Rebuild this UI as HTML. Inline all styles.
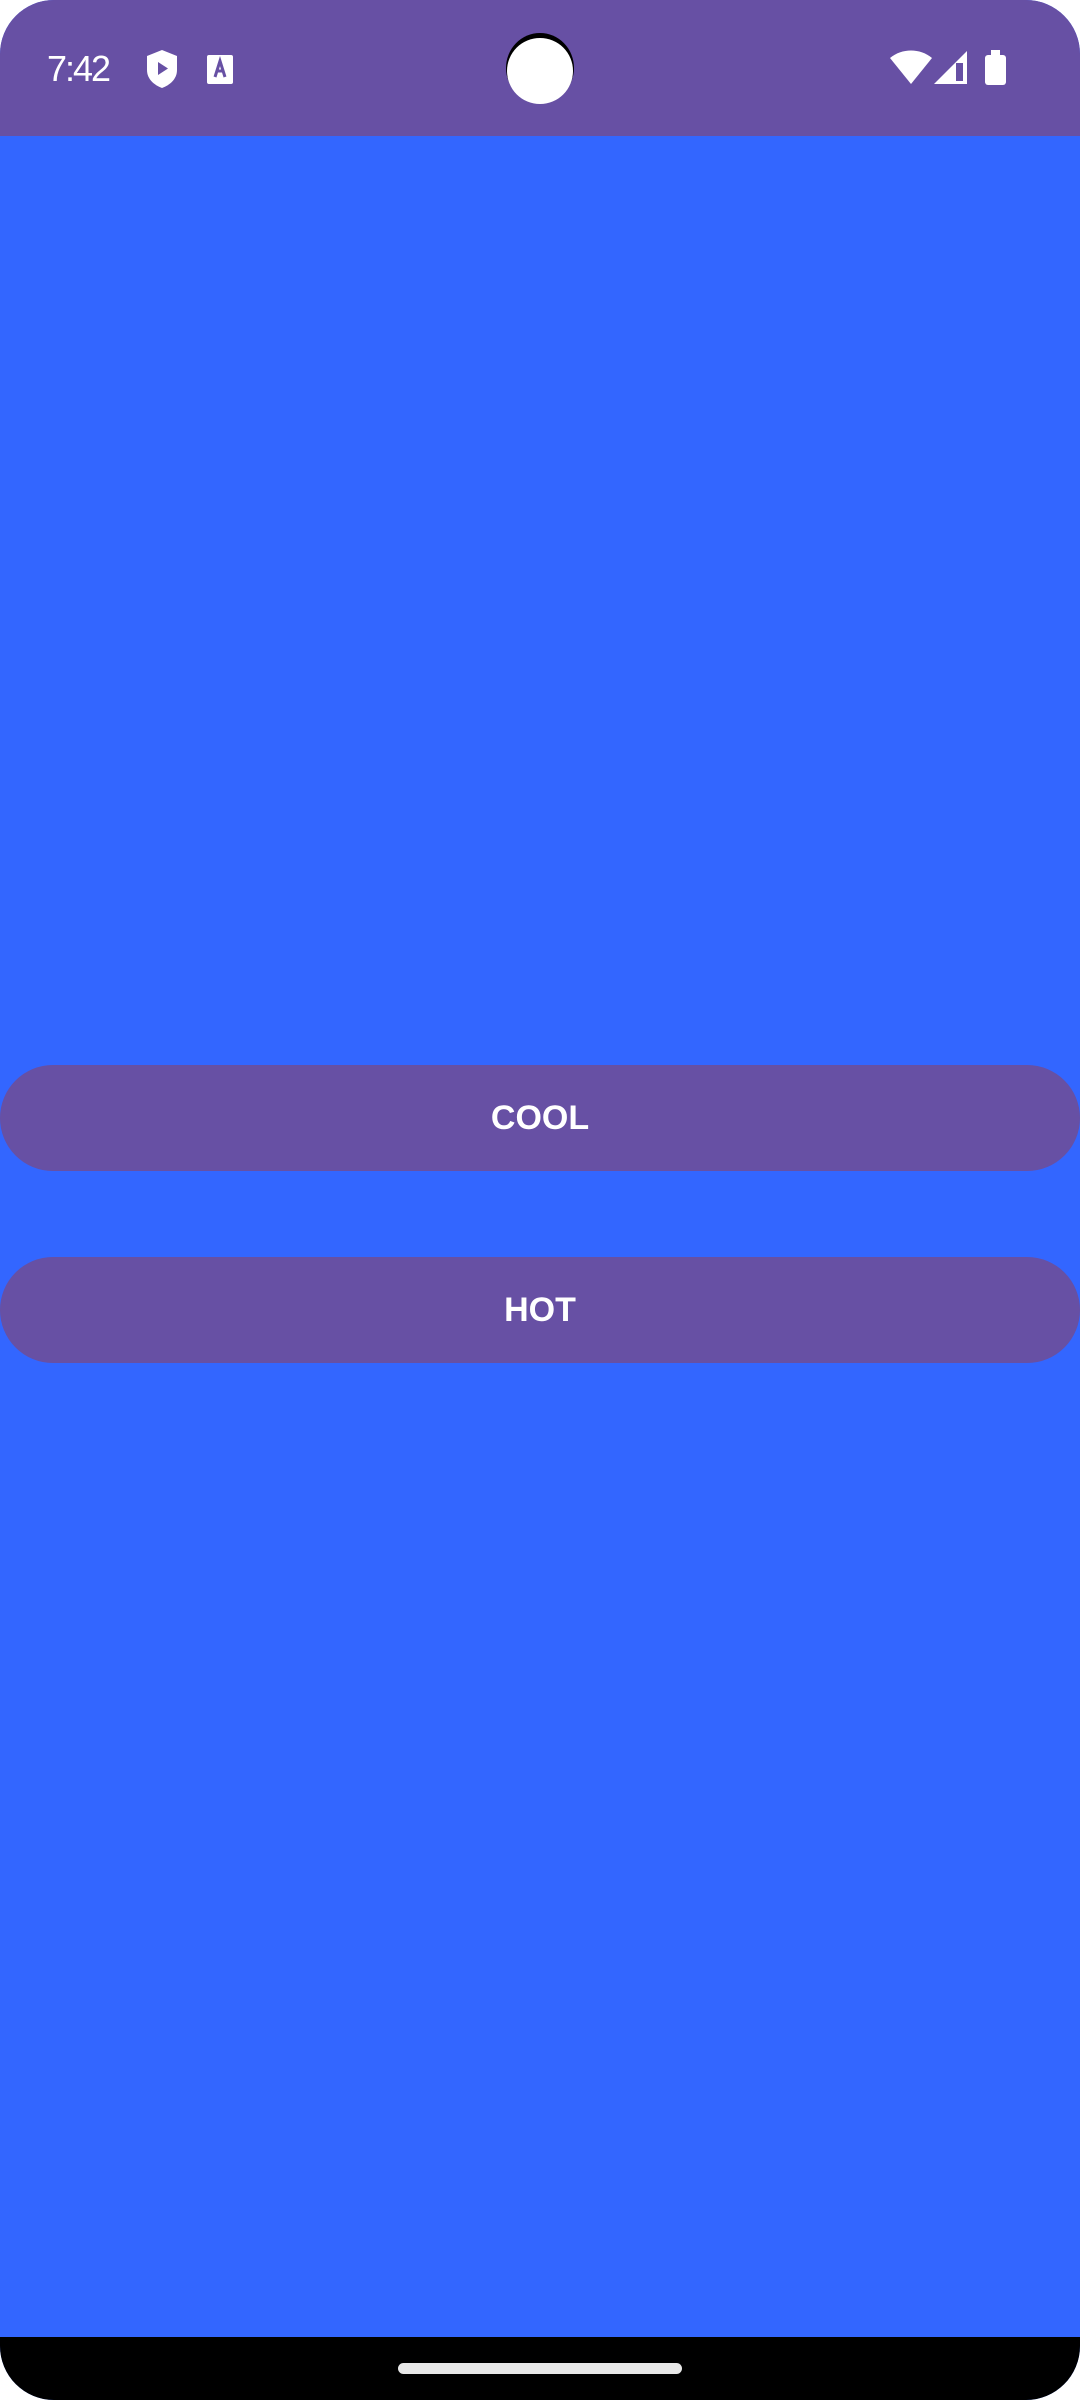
<!DOCTYPE html>
<html><head><meta charset="utf-8"><style>
html,body{margin:0;padding:0;background:#fff;}
#s{position:relative;width:1080px;height:2400px;overflow:hidden;background:#3366ff;border-radius:54px;font-family:"Liberation Sans",sans-serif;}
#sb{position:absolute;left:0;top:0;width:1080px;height:136px;background:#6750a4;}
.btn{position:absolute;left:0;width:1080px;background:#6750a4;border-radius:53px;color:#fff;font-size:34px;font-weight:bold;text-align:center;}
#nav{position:absolute;left:0;top:2337px;width:1080px;height:63px;background:#000;}
</style></head><body><div id="s">
<div id="sb">
<div style="position:absolute;left:47px;top:48px;color:#fff;font-size:36px;letter-spacing:-2px;">7:42</div>
<svg style="position:absolute;left:146px;top:50px" width="32" height="38" viewBox="0 0 32 38"><path d="M16 0 L31 6 V20 C31 29 24 35 16 38 C8 35 1 29 1 20 V6 Z" fill="#fff"/><path d="M12 12 L22 18.5 L12 25 Z" fill="#6750a4"/></svg>
<svg style="position:absolute;left:207px;top:55px" width="26" height="29" viewBox="0 0 26 29"><rect width="26" height="29" rx="2" fill="#fff"/><path d="M8 22 L13 6 L18 22 M10 16 H16" stroke="#6750a4" stroke-width="3" fill="none"/></svg>
<div style="position:absolute;left:506px;top:33px;width:68px;height:70px;border-radius:50%;background:#000;"></div>
<div style="position:absolute;left:507px;top:38px;width:66px;height:66px;border-radius:50%;background:#fff;"></div>
<svg style="position:absolute;left:890px;top:50px" width="42" height="34" viewBox="0 0 42 34"><path d="M0 8 C12 -2 30 -2 42 8 L21 34 Z" fill="#fff"/></svg>
<svg style="position:absolute;left:934px;top:51px" width="33" height="33" viewBox="0 0 33 33"><path d="M33 0 V33 H0 Z" fill="#fff"/><rect x="22" y="12" width="7" height="18" fill="#6750a4"/></svg>
<div style="position:absolute;left:985px;top:55px;width:21px;height:30px;background:#fff;border-radius:3px;"></div>
<div style="position:absolute;left:991px;top:50px;width:9px;height:6px;background:#fff;"></div>
</div>
<div class="btn" style="top:1065px;height:106px;line-height:106px;">COOL</div>
<div class="btn" style="top:1257px;height:106px;line-height:106px;">HOT</div>
<div id="nav"><div style="position:absolute;left:398px;top:26px;width:284px;height:11px;border-radius:6px;background:#e8e8e8;"></div></div>
</div></body></html>
